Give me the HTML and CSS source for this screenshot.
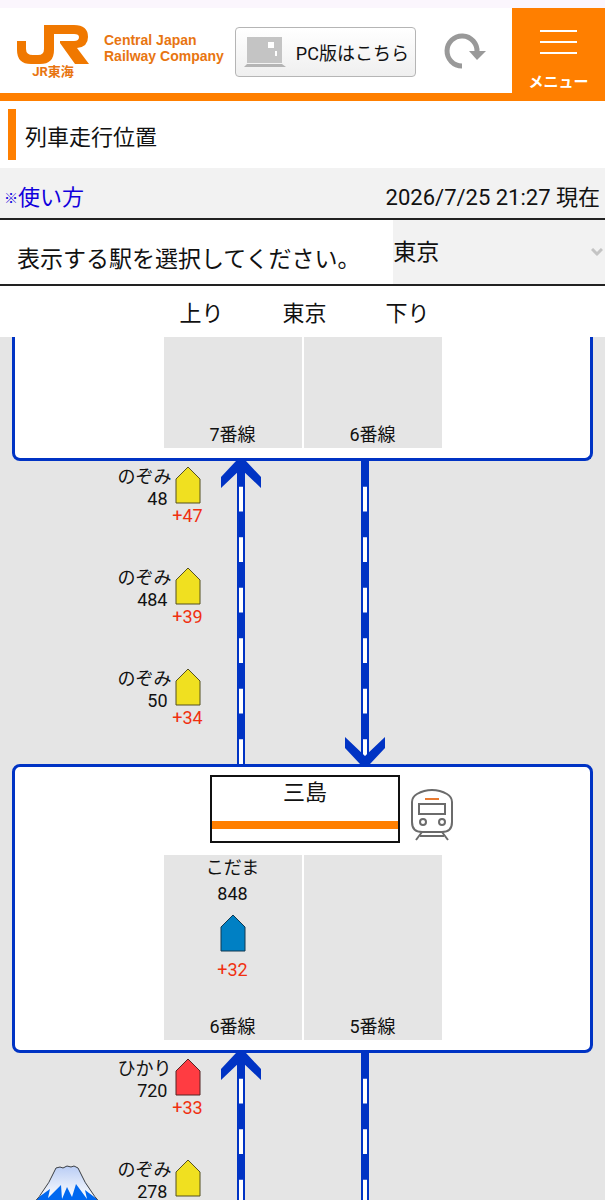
FILE: index.html
```html
<!DOCTYPE html>
<html lang="ja">
<head>
    <meta charset="UTF-8">
    <meta name="viewport" content="width=device-width, initial-scale=1.0">
    <title>列車走行位置 - JR東海</title>
    <link rel="stylesheet" href="styles.css">
</head>
<body>
    <header class="site-header">
        <a href="#" class="logo">
            <span class="logo-mark">
                <svg width="72" height="39" viewBox="0 0 72 39" aria-hidden="true">
                    <path fill="#f07800" d="M0 16H9V24Q9 30 16 30H21Q27 30 27 24V0H57Q71 0 71 12Q71 22 60 23L72 39H58L43 18V16H57Q62 16 62 12Q62 9 57 9H37V25Q37 39 23 39H14Q0 39 0 25Z"/>
                </svg>
                <span class="logo-ja">JR東海</span>
            </span>
            <span class="logo-en">Central Japan<br>Railway Company</span>
        </a>
        <button type="button" class="pc-button">
            <svg width="42" height="30" viewBox="0 0 42 30" aria-hidden="true">
                <path fill="#c4c4c4" d="M3 0H38V26H3Z"/>
                <path fill="#b4b4b4" d="M3 27H38L42 30H0Z"/>
                <path fill="#fff" d="M24 5H30V11H24ZM31 14H33V19H31Z"/>
            </svg>
            PC版はこちら
        </button>
        <button type="button" class="reload-button" aria-label="更新">
            <svg width="42" height="37" viewBox="0 0 42 37">
                <path fill="none" stroke="#999" stroke-width="5" d="M18 33A15 15 0 1 1 33 19"/>
                <path fill="#999" d="M25 18H42L33 27Z"/>
            </svg>
        </button>
        <button type="button" class="menu-button">
            <svg width="38" height="25" viewBox="0 0 38 25" aria-hidden="true">
                <path stroke="#fff" stroke-width="2" d="M0 1H37M0 12H37M0 23H37"/>
            </svg>
            メニュー
        </button>
    </header>

    <div class="page-title">
        <h1>列車走行位置</h1>
    </div>

    <div class="info">
        <a href="#"><span class="mark">※</span>使い方</a>
        <span>2026/7/25 21:27 現在</span>
    </div>

    <div class="station-select">
        <label for="station">表示する駅を選択してください。</label>
        <div class="select-box">
            <select id="station">
                <option>東京</option>
            </select>
            <svg class="chevron" width="12" height="9" viewBox="0 0 12 9" aria-hidden="true">
                <path fill="none" stroke="#c4c4c4" stroke-width="3" d="M1 1L6 6L11 1"/>
            </svg>
        </div>
    </div>

    <div class="direction">
        <span>上り</span>
        <span>東京</span>
        <span>下り</span>
    </div>

    <main class="map">
        <section class="station station-cut">
            <div class="platforms">
                <div class="platform"><span class="platform-name">7番線</span></div>
                <div class="platform"><span class="platform-name">6番線</span></div>
            </div>
        </section>

        <section class="between">
            <div class="trains">
                <div class="train">
                    <div class="train-name">のぞみ<span>48</span></div>
                    <div class="train-mark">
                        <svg class="nozomi" width="26" height="38" viewBox="0 0 26 38"><path d="M1 13L13 1L25 13V37H1Z"/></svg>
                        <span class="delay">+47</span>
                    </div>
                </div>
                <div class="train">
                    <div class="train-name">のぞみ<span>484</span></div>
                    <div class="train-mark">
                        <svg class="nozomi" width="26" height="38" viewBox="0 0 26 38"><path d="M1 13L13 1L25 13V37H1Z"/></svg>
                        <span class="delay">+39</span>
                    </div>
                </div>
                <div class="train">
                    <div class="train-name">のぞみ<span>50</span></div>
                    <div class="train-mark">
                        <svg class="nozomi" width="26" height="38" viewBox="0 0 26 38"><path d="M1 13L13 1L25 13V37H1Z"/></svg>
                        <span class="delay">+34</span>
                    </div>
                </div>
            </div>
            <div class="track up">
                <svg class="arrow" width="40" height="27" viewBox="0 0 40 27"><path d="M15 0H25L40 16V27L20 8L0 27V16Z"/></svg>
            </div>
            <div class="track down">
                <svg class="arrow" width="40" height="27" viewBox="0 0 40 27"><path d="M15 27H25L40 11V0L20 19L0 0V11Z"/></svg>
            </div>
        </section>

        <section class="station">
            <div class="station-head">
                <h2 class="board">三島</h2>
                <a href="#" class="train-link" aria-label="三島駅の列車">
                    <svg width="42" height="52" viewBox="0 0 42 52">
                        <g fill="none" stroke="#6b6b6b" stroke-width="2">
                            <path d="M1 13Q1 8 6 5Q13 1 21 1Q29 1 36 5Q41 8 41 13V33Q41 43 31 43H11Q1 43 1 33Z"/>
                            <path d="M8 15H34V25H8Z"/>
                            <circle cx="12" cy="33" r="3"/>
                            <circle cx="31" cy="33" r="3"/>
                            <path d="M11 43L5 51M31 43L37 51M9 47H33"/>
                        </g>
                        <path stroke="#e87a30" stroke-width="2" d="M14 10H28"/>
                    </svg>
                </a>
            </div>
            <div class="platforms">
                <div class="platform">
                    <span>こだま</span>
                    <span>848</span>
                    <svg class="kodama" width="26" height="38" viewBox="0 0 26 38"><path d="M1 13L13 1L25 13V37H1Z"/></svg>
                    <span class="delay">+32</span>
                    <span class="platform-name">6番線</span>
                </div>
                <div class="platform"><span class="platform-name">5番線</span></div>
            </div>
        </section>

        <section class="between">
            <svg class="fuji" width="108" height="60" viewBox="0 0 108 60" aria-hidden="true">
                <defs>
                    <linearGradient id="snow" x1="0" y1="0" x2="0" y2="1">
                        <stop offset="0" stop-color="#b9cdf5"/>
                        <stop offset="1" stop-color="#fff"/>
                    </linearGradient>
                </defs>
                <path fill="#0068f0" d="M0 59Q31 32 43 3L47 2L50 3L54 1L58 2L61 1L65 3Q77 32 108 59Z"/>
                <path fill="url(#snow)" d="M23 34Q36 20 43 3L47 2L50 3L54 1L58 2L61 1L65 3Q72 20 84 34L72 25L74 34L63 19L59 32L54 22L49 34L48 20L35 33L37 24Z"/>
                <path fill="none" stroke="#444" d="M0 59Q31 32 43 3L47 2L50 3L54 1L58 2L61 1L65 3Q77 32 108 59"/>
            </svg>
            <div class="trains">
                <div class="train">
                    <div class="train-name">ひかり<span>720</span></div>
                    <div class="train-mark">
                        <svg class="hikari" width="26" height="38" viewBox="0 0 26 38"><path d="M1 13L13 1L25 13V37H1Z"/></svg>
                        <span class="delay">+33</span>
                    </div>
                </div>
                <div class="train">
                    <div class="train-name">のぞみ<span>278</span></div>
                    <div class="train-mark">
                        <svg class="nozomi" width="26" height="38" viewBox="0 0 26 38"><path d="M1 13L13 1L25 13V37H1Z"/></svg>
                    </div>
                </div>
            </div>
            <div class="track up">
                <svg class="arrow" width="40" height="27" viewBox="0 0 40 27"><path d="M15 0H25L40 16V27L20 8L0 27V16Z"/></svg>
            </div>
            <div class="track down"></div>
        </section>
    </main>
</body>
</html>
```

FILE: styles.css
```css
* {
    box-sizing: border-box;
}
body {
    margin: 0;
    height: 100vh;
    display: flex;
    flex-direction: column;
    overflow: hidden;
    border-top: 8px solid #fbf6fd;
    background: #fff;
    color: #111;
    font-family: Roboto, "Noto Sans CJK JP", sans-serif;
    font-size: 22px;
}
h1, h2 {
    margin: 0;
    font-size: 22px;
    font-weight: normal;
}
button {
    padding: 0;
    border: none;
    background: none;
    font-family: inherit;
    cursor: pointer;
}
svg {
    display: block;
    flex-shrink: 0;
}

/* ヘッダー */
.site-header {
    display: flex;
    align-items: center;
    flex-shrink: 0;
    height: 93px;
    padding: 2px 0 0 17px;
    border-bottom: 8px solid #ff7f00;
}
.logo {
    display: flex;
    gap: 15px;
    padding-top: 2px;
    color: #e87511;
    text-decoration: none;
}
.logo-mark {
    display: flex;
    flex-direction: column;
    align-items: center;
}
.logo-ja {
    font-size: 13px;
    line-height: 16px;
    font-weight: bold;
}
.logo-en {
    padding-top: 7px;
    font-family: "Liberation Sans", Arial, sans-serif;
    font-size: 14px;
    line-height: 16px;
    font-weight: bold;
    white-space: nowrap;
}
.pc-button {
    display: flex;
    align-items: center;
    gap: 10px;
    height: 50px;
    margin-left: 11px;
    padding: 0 6px 0 8px;
    border: 1px solid #b5b5b5;
    border-radius: 4px;
    background: linear-gradient(#fff, #efefef);
    color: #111;
    font-size: 18px;
    white-space: nowrap;
}
.reload-button {
    margin-left: 28px;
}
.menu-button {
    display: flex;
    flex-direction: column;
    align-items: center;
    align-self: flex-start;
    gap: 17px;
    width: 93px;
    height: 93px;
    margin: -2px 0 0 auto;
    padding-top: 22px;
    background: #ff7f00;
    color: #fff;
    font-size: 15px;
    line-height: 20px;
    font-weight: bold;
}

/* タイトル */
.page-title {
    flex-shrink: 0;
    padding: 8px;
}
.page-title h1 {
    padding: 6px 0 0 9px;
    border-left: 8px solid #ff7f00;
    line-height: 45px;
}
.info {
    display: flex;
    justify-content: space-between;
    align-items: center;
    flex-shrink: 0;
    height: 52px;
    padding: 4px 5px 0 4px;
    border-bottom: 2px solid #222;
    background: #f2f2f2;
}
.info a {
    color: #1100dd;
    text-decoration: none;
}
.mark {
    font-size: 14px;
    font-weight: bold;
    vertical-align: 2px;
}
.station-select {
    display: flex;
    flex-shrink: 0;
    height: 66px;
    border-bottom: 2px solid #222;
    font-size: 23px;
}
.station-select label {
    flex: 64;
    padding: 10px 0 0 17px;
    line-height: 60px;
    white-space: nowrap;
}
.select-box {
    position: relative;
    flex: 36;
    background: #f2f2f2;
}
.select-box select {
    appearance: none;
    width: 100%;
    height: 100%;
    padding: 0;
    border: none;
    background: none;
    color: #111;
    font: inherit;
}
.chevron {
    position: absolute;
    right: 2px;
    top: 28px;
}
.direction {
    display: grid;
    grid-template-columns: repeat(3, 103px);
    justify-content: center;
    flex-shrink: 0;
    line-height: 51px;
    padding: 2px 0 0 4px;
    height: 51px;
    text-align: center;
}

/* 路線図 */
.map {
    flex: 1;
    min-height: 0;
    overflow: hidden;
    background: #e5e5e5;
    font-size: 18px;
}
.station {
    margin: 0 12px;
    padding: 8px 0 10px;
    border: 3px solid #0033c4;
    border-radius: 8px;
    background: #fff;
}
.station-cut {
    padding-top: 0;
    border-top: none;
    border-top-left-radius: 0;
    border-top-right-radius: 0;
}
.station-head {
    display: grid;
    grid-template-columns: 1fr 190px 1fr;
    align-items: end;
    column-gap: 11px;
    margin-bottom: 12px;
    padding-left: 5px;
}
.board {
    grid-column: 2;
    height: 68px;
    border: 2px solid #111;
    background: linear-gradient(#ff7f00, #ff7f00) 0 44px / 100% 8px no-repeat;
    line-height: 32px;
    text-align: center;
}
.train-link {
    padding-bottom: 2px;
}
.platforms {
    display: grid;
    grid-template-columns: repeat(2, 138px);
    justify-content: center;
    gap: 2px;
}
.platform {
    display: flex;
    flex-direction: column;
    align-items: center;
    min-height: 111px;
    background: #e5e5e5;
    line-height: 26px;
}
.platform svg {
    margin: 7px 0 5px;
}
.platform-name {
    margin-top: auto;
}
.platform .delay + .platform-name {
    padding-top: 31px;
}

/* 駅間 */
.between {
    position: relative;
    display: grid;
    grid-template-columns: 1fr 8px 116px 8px 1fr;
}
.trains {
    display: flex;
    flex-direction: column;
    padding-right: 33px;
}
.train {
    display: flex;
    justify-content: flex-end;
    height: 101px;
    padding-top: 5px;
}
.train-name {
    display: flex;
    flex-direction: column;
    align-items: flex-end;
    line-height: 22px;
}
.train-name span {
    padding-right: 4px;
}
.train-mark {
    display: flex;
    flex-direction: column;
    align-items: center;
    width: 32px;
}
.delay {
    color: #f03010;
}
.train .delay {
    line-height: 24px;
}
.nozomi {
    fill: #f0e020;
    stroke: #555020;
}
.hikari {
    fill: #ff3c42;
    stroke: #552525;
}
.kodama {
    fill: #0080c4;
    stroke: #103850;
}
.track {
    position: relative;
    background: linear-gradient(#0033c4 50%, #fff 50%) 2px 0 / 4px 50px no-repeat round #0033c4;
}
.down {
    grid-column: 4;
}
.arrow {
    position: absolute;
    left: -16px;
    fill: #0033c4;
}
.up .arrow {
    top: 0;
}
.down .arrow {
    bottom: 0;
}
.fuji {
    position: absolute;
    left: 13px;
    top: 112px;
}
```
